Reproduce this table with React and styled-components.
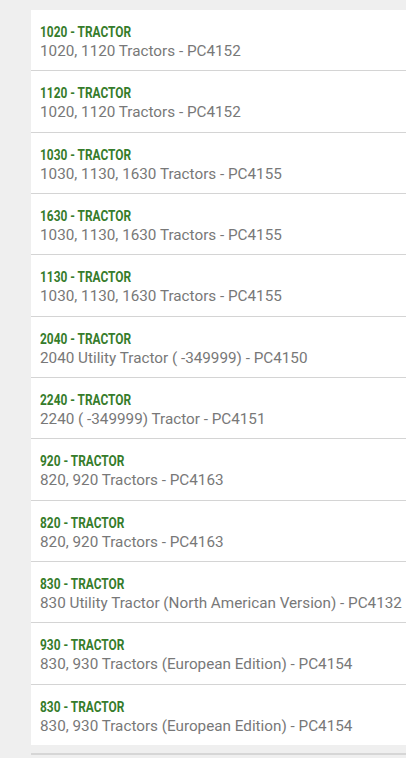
import React from 'react';
import styled, { createGlobalStyle } from 'styled-components';

const GlobalStyle = createGlobalStyle`
  html, body {
    margin: 0;
    padding: 0;
    background: #efefef;
    font-family: Roboto, "Liberation Sans", sans-serif;
  }
`;

const Page = styled.div`
  padding: 10px 0 0 31px;
  overflow: hidden;
`;

const List = styled.ul`
  list-style: none;
  margin: 0;
  padding: 0;
  background: #fff;
`;

const Item = styled.li`
  padding: 14px 9px 10.33px;
  border-bottom: 1px solid #d4d4d4;

  &:last-child {
    border-bottom: none;
  }
`;

// condensed bold heading
const Title = styled.div`
  color: #367c2b;
  font-size: 14px;
  font-weight: 700;
  line-height: 16px;
  white-space: nowrap;
  transform: scaleX(0.85);
  transform-origin: left center;
`;

const Desc = styled.div`
  margin-top: 2px;
  color: #787878;
  font-size: 15.25px;
  line-height: 18px;
  white-space: nowrap;
`;

const Footer = styled.div`
  margin-top: 8px;
  border-top: 2px solid #d6d6d6;
  height: 10px;
`;

const models = [
  ['1020', '1020, 1120 Tractors - PC4152'],
  ['1120', '1020, 1120 Tractors - PC4152'],
  ['1030', '1030, 1130, 1630 Tractors - PC4155'],
  ['1630', '1030, 1130, 1630 Tractors - PC4155'],
  ['1130', '1030, 1130, 1630 Tractors - PC4155'],
  ['2040', '2040 Utility Tractor ( -349999) - PC4150'],
  ['2240', '2240 ( -349999) Tractor - PC4151'],
  ['920', '820, 920 Tractors - PC4163'],
  ['820', '820, 920 Tractors - PC4163'],
  ['830', '830 Utility Tractor (North American Version) - PC4132'],
  ['930', '830, 930 Tractors (European Edition) - PC4154'],
  ['830', '830, 930 Tractors (European Edition) - PC4154'],
];

export default function App() {
  return (
    <Page>
      <GlobalStyle />
      <List>
        {models.map(([num, desc], i) => (
          <Item key={i}>
            <Title>{num} - TRACTOR</Title>
            <Desc>{desc}</Desc>
          </Item>
        ))}
      </List>
      <Footer />
    </Page>
  );
}
